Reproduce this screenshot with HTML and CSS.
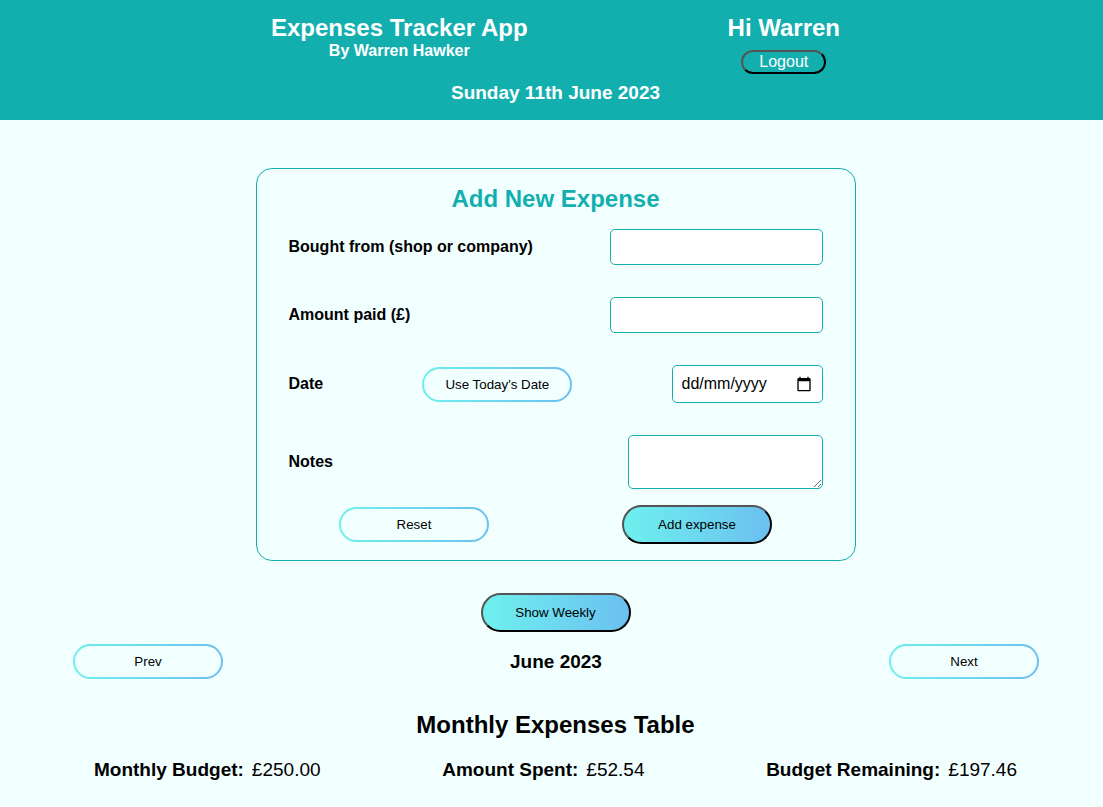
FILE: index.html
```html
<!DOCTYPE html>
<html lang="en-GB">
<head>
<meta charset="utf-8">
<meta name="viewport" content="width=device-width, initial-scale=1">
<title>Expenses Tracker App</title>
<link rel="stylesheet" href="styles.css">
</head>
<body>
<header class="header">
  <div class="header-top">
    <div class="brand">
      <h1 class="title">Expenses Tracker App</h1>
      <p class="author">By Warren Hawker</p>
    </div>
    <div class="user">
      <h2 class="title">Hi Warren</h2>
      <button class="logout" type="button">Logout</button>
    </div>
  </div>
  <p class="today">Sunday 11th June 2023</p>
</header>
<main class="main">
  <form class="card">
    <h2 class="card-title">Add New Expense</h2>
    <div class="row">
      <label for="shop">Bought from (shop or company)</label>
      <input class="field" id="shop" type="text">
    </div>
    <div class="row">
      <label for="amount">Amount paid (£)</label>
      <input class="field" id="amount" type="text" inputmode="decimal">
    </div>
    <div class="row">
      <label for="date">Date</label>
      <button class="btn btn-outline" type="button">Use Today's Date</button>
      <div class="field field-date">
        <input class="date-input" id="date" type="text" placeholder="dd/mm/yyyy">
        <button class="date-picker" type="button" aria-label="Open calendar">
          <svg width="16" height="16" viewBox="0 0 24 24" aria-hidden="true"><path d="M20 3h-1V1h-2v2H7V1H5v2H4c-1.1 0-2 .9-2 2v16c0 1.100.9 2 2 2h16c1.100 0 2-.9 2-2V5c0-1.100-.9-2-2-2zm0 18H4V8h16v13z"/></svg>
        </button>
      </div>
    </div>
    <div class="row">
      <label for="notes">Notes</label>
      <textarea class="field field-notes" id="notes"></textarea>
    </div>
    <div class="actions">
      <button class="btn btn-outline" type="reset">Reset</button>
      <button class="btn btn-solid" type="button">Add expense</button>
    </div>
  </form>
  <button class="btn btn-solid" type="button">Show Weekly</button>
  <nav class="period" aria-label="Month">
    <button class="btn btn-outline" type="button">Prev</button>
    <h3 class="month">June 2023</h3>
    <button class="btn btn-outline" type="button">Next</button>
  </nav>
  <h2 class="table-title">Monthly Expenses Table</h2>
  <dl class="totals">
    <div class="total"><dt>Monthly Budget:</dt><dd>£250.00</dd></div>
    <div class="total"><dt>Amount Spent:</dt><dd>£52.54</dd></div>
    <div class="total"><dt>Budget Remaining:</dt><dd>£197.46</dd></div>
  </dl>
</main>
</body>
</html>
```
FILE: styles.css
```css
* {
  box-sizing: border-box;
}

body {
  margin: 0;
  background: #f2ffff;
  color: #000;
  font-family: "Liberation Sans", Arial, sans-serif;
  font-size: 16px;
}

h1, h2, h3, p, dl, dd {
  margin: 0;
}

.header {
  display: flex;
  flex-direction: column;
  align-items: center;
  gap: 8px;
  padding: 14px 0 17px 8px;
  background: #13afaf;
  color: #fff;
  text-align: center;
}

.header-top {
  display: flex;
  gap: 200px;
}

.title {
  font-size: 24px;
  line-height: 28px;
}

.author {
  font-weight: bold;
  line-height: 18px;
}

.user {
  display: flex;
  flex-direction: column;
  align-items: center;
  gap: 8px;
}

.logout {
  padding: 0 16px;
  border: 2px outset #000;
  border-radius: 16px;
  background: transparent;
  color: #fff;
  font-family: inherit;
  font-size: 16px;
  line-height: 20px;
}

.today {
  font-size: 19px;
  font-weight: bold;
  line-height: 21px;
}

.main {
  display: flex;
  flex-direction: column;
  align-items: center;
  padding: 48px 0 24px 8px;
}

.card {
  display: flex;
  flex-direction: column;
  gap: 32px;
  width: 100%;
  max-width: 600px;
  margin-bottom: 32px;
  padding: 16px 32px;
  border: 1px solid #13afaf;
  border-radius: 16px;
}

.card-title {
  margin-bottom: -16px;
  color: #13afaf;
  font-size: 24px;
  line-height: 28px;
  text-align: center;
}

.row {
  display: flex;
  align-items: center;
  justify-content: space-between;
  font-weight: bold;
}

.field {
  width: 213px;
  height: 36px;
  padding: 8px;
  border: 1px solid #13afaf;
  border-radius: 5px;
  background: #fff;
  color: #000;
  font-family: inherit;
  font-size: 16px;
}

.field-date {
  display: flex;
  align-items: center;
  width: 151px;
  height: 38px;
  padding: 0 10px 0 9px;
}

.date-input {
  flex: 1;
  min-width: 0;
  padding: 0;
  border: 0;
  background: transparent;
  color: inherit;
  font-family: inherit;
  font-size: 16px;
}

.date-input::placeholder {
  color: #000;
  opacity: 1;
}

.date-picker {
  display: flex;
  padding: 0;
  border: 0;
  background: transparent;
}

.field-notes {
  width: 195px;
  height: 54px;
}

.actions {
  display: flex;
  align-items: center;
  justify-content: center;
  gap: 133px;
  margin-top: -16px;
}

.btn {
  width: 150px;
  color: #000;
  font-family: inherit;
  line-height: 15px;
}

.btn-outline {
  padding: 8px;
  border: 2px solid transparent;
  border-radius: 18px;
  background:
    linear-gradient(#f2ffff, #f2ffff) padding-box,
    linear-gradient(to right, #6ef0ee, #6bc0f0) border-box;
}

.btn-solid {
  padding: 10px 8px;
  border: 2px outset #000;
  border-radius: 20px;
  background: linear-gradient(to right, #6ef0ee, #6bc0f0);
}

.period {
  display: flex;
  align-items: center;
  justify-content: space-between;
  width: 100%;
  margin: 12px 0 32px;
  padding: 0 64px 0 65px;
}

.month {
  font-size: 19px;
  line-height: 22px;
}

.table-title {
  margin-bottom: 20px;
  font-size: 24px;
  line-height: 28px;
}

.totals {
  display: flex;
  justify-content: space-between;
  width: 100%;
  padding: 0 86px;
  font-size: 19px;
  line-height: 22px;
}

.total {
  display: flex;
  gap: 8px;
}

.total dt {
  font-weight: bold;
}
```
